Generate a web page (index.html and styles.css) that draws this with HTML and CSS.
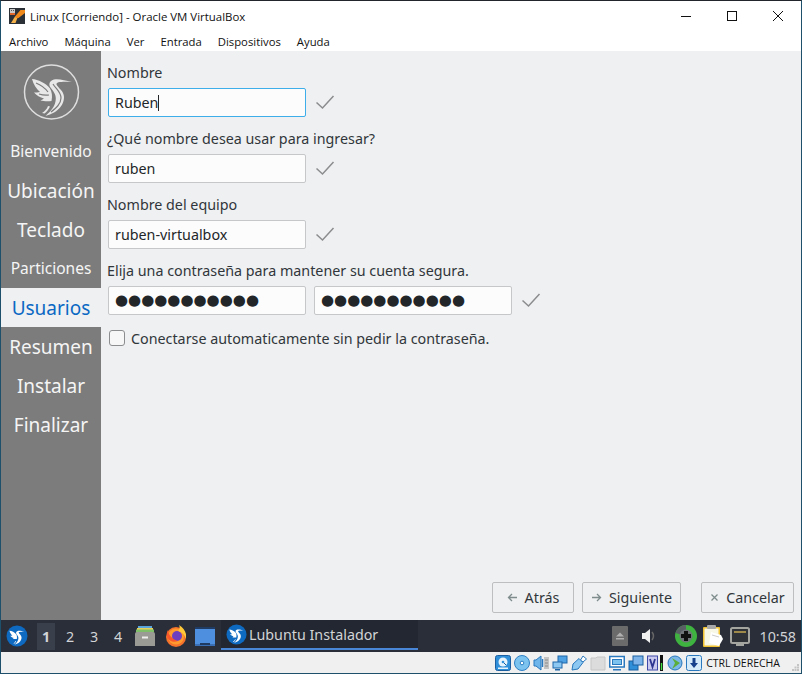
FILE: index.html
```html
<!DOCTYPE html>
<html lang="es">
<head>
    <meta charset="UTF-8">
    <title>Linux [Corriendo] - Oracle VM VirtualBox</title>
    <link rel="stylesheet" href="styles.css">
</head>
<body>
    <svg class="defs" width="0" height="0">
        <symbol id="bird" viewBox="0 0 58 58">
            <path d="M49 18 C42 16.500 36 14.500 31 15.500 C27 16.500 25 20 27.500 23.500 C30 27 33 30 32.800 35 C32.500 42 28 47 22.500 52 C30 50 41 44.500 41 33 C41 27 35 24 33.500 20.500 C33 18 38 17.500 49 18 Z"/>
            <path d="M9 15 C15 15.500 23 19 27 24.500 C29 28 29.500 32 28.500 37 C24 37.500 20 37 17.500 36.500 C19 35.800 20 35 21 34.500 C17 33.500 13.500 31.500 11 28.500 C13 28.500 15 28.500 17 28 C13.500 25 10.500 20.500 9 15 Z"/>
            <path d="M25 42 C24 45 21.500 47.500 19 49 L21.500 49.500 C24 47.500 26 45 27 42.500 Z"/>
        </symbol>
    </svg>

    <div class="window">
        <header class="titlebar">
            <svg class="vbox-logo" width="16" height="16" viewBox="0 0 16 16">
                <rect width="16" height="16" fill="#2b2f36"/>
                <path d="M2 15 L6 8.500 L9 8.500 L6.500 15 Z" fill="#f6b24a"/>
                <path d="M6 8.500 L11.500 2 L16 2 L16 5 L9.500 10 L7 10 Z" fill="#f08a1d"/>
                <rect x="1" y="1" width="5" height="4" fill="#c9c9c9"/>
                <rect x="2" y="2" width="1" height="1" fill="#555"/>
                <rect x="4" y="2" width="1" height="1" fill="#555"/>
                <rect x="1" y="5" width="5" height="2" fill="#e0672c"/>
            </svg>
            <span>Linux [Corriendo] - Oracle VM VirtualBox</span>
            <div class="window-buttons">
                <svg width="46" height="30" viewBox="0 0 46 30"><path d="M18 15.500h10" stroke="#111" fill="none"/></svg>
                <svg width="46" height="30" viewBox="0 0 46 30"><rect x="18.500" y="10.500" width="9" height="9" stroke="#111" fill="none"/></svg>
                <svg width="46" height="30" viewBox="0 0 46 30"><path d="M18 10l10 10M28 10l-10 10" stroke="#111" fill="none"/></svg>
            </div>
        </header>
        <nav class="menubar">
            <span>Archivo</span>
            <span>Máquina</span>
            <span>Ver</span>
            <span>Entrada</span>
            <span>Dispositivos</span>
            <span>Ayuda</span>
        </nav>

        <div class="installer">
            <aside class="sidebar">
                <svg class="logo" width="58" height="58" viewBox="0 0 58 58" fill="none" stroke="#dedede">
                    <circle cx="28.500" cy="28" r="27" stroke-width="1.500"/>
                    <use href="#bird" fill="#e8e8e8" stroke="none"/>
                    <path d="M13 19 C18 21 22 24 25 28 M16 30 C19 31 22 31.500 26 31 M30 20 C33 25 38 28 38 34 C38 40 33 44 28 48" stroke="#7c7c7c" stroke-width="1.200"/>
                </svg>
                <ul class="steps">
                    <li class="small">Bienvenido</li>
                    <li>Ubicación</li>
                    <li>Teclado</li>
                    <li class="small">Particiones</li>
                    <li class="active">Usuarios</li>
                    <li>Resumen</li>
                    <li>Instalar</li>
                    <li>Finalizar</li>
                </ul>
            </aside>

            <main class="content">
                <div class="form">
                    <label class="field-label">Nombre</label>
                    <div class="field-row">
                        <div class="input focused">Ruben<span class="caret"></span></div>
                        <svg class="check" width="20" height="16" viewBox="0 0 20 16"><path d="M1.500 7.500 L7.500 13 L18.500 1" /></svg>
                    </div>
                    <label class="field-label">¿Qué nombre desea usar para ingresar?</label>
                    <div class="field-row">
                        <div class="input">ruben</div>
                        <svg class="check" width="20" height="16" viewBox="0 0 20 16"><path d="M1.500 7.500 L7.500 13 L18.500 1" /></svg>
                    </div>
                    <label class="field-label">Nombre del equipo</label>
                    <div class="field-row">
                        <div class="input">ruben-virtualbox</div>
                        <svg class="check" width="20" height="16" viewBox="0 0 20 16"><path d="M1.500 7.500 L7.500 13 L18.500 1" /></svg>
                    </div>
                    <label class="field-label">Elija una contraseña para mantener su cuenta segura.</label>
                    <div class="field-row">
                        <div class="input dots">●●●●●●●●●●●</div>
                        <div class="input dots">●●●●●●●●●●●</div>
                        <svg class="check" width="20" height="16" viewBox="0 0 20 16"><path d="M1.500 7.500 L7.500 13 L18.500 1" /></svg>
                    </div>
                    <div class="autologin">
                        <span class="checkbox"></span>
                        <span>Conectarse automaticamente sin pedir la contraseña.</span>
                    </div>
                </div>
                <div class="actions">
                    <button class="btn btn-back">
                        <svg class="btn-icon" width="11" height="9" viewBox="0 0 11 9"><path d="M10 4.500H2M5 1L1.500 4.500L5 8"/></svg>Atrás
                    </button>
                    <button class="btn btn-next">
                        <svg class="btn-icon" width="11" height="9" viewBox="0 0 11 9"><path d="M1 4.500H9M6 1L9.500 4.500L6 8"/></svg>Siguiente
                    </button>
                    <button class="btn btn-cancel">
                        <svg class="btn-icon" width="9" height="9" viewBox="0 0 9 9"><path d="M1.500 1.500L7.500 7.500M7.500 1.500L1.500 7.500"/></svg>Cancelar
                    </button>
                </div>
            </main>
        </div>

        <div class="panel">
            <svg class="start" width="22" height="22" viewBox="0 0 22 22">
                <circle cx="11" cy="11" r="10.500" fill="#0e69c0"/>
                <use href="#bird" x="0" y="0" width="22" height="22" fill="#fff"/>
            </svg>
            <div class="desktops">
                <span class="current">1</span>
                <span>2</span>
                <span>3</span>
                <span>4</span>
            </div>
            <svg class="launcher files" width="20" height="20" viewBox="0 0 20 20">
                <rect x="3" y="0" width="14" height="3" fill="#5aa5dc"/>
                <rect x="2" y="2" width="16" height="2" fill="#e6cf5a"/>
                <rect x="1" y="3.500" width="18" height="3" fill="#7fbf6a"/>
                <path d="M0 8 Q0 6 2 6 H18 Q20 6 20 8 V20 H0 Z" fill="#9b9b95"/>
                <rect x="7" y="10.500" width="6" height="2" fill="#eee"/>
            </svg>
            <svg class="launcher firefox" width="20" height="22" viewBox="0 0 20 22">
                <circle cx="10" cy="12" r="10" fill="#f4722b"/>
                <circle cx="10" cy="11.500" r="8" fill="#ff9a2e"/>
                <circle cx="11" cy="11" r="5" fill="#6e3fbe"/>
                <path d="M13 0 C19 4 21 9 20 14 C18 9 16 7 12 6 C14 4 14 2 13 0 Z" fill="#ffc93a"/>
                <path d="M1 5 C3 10 6 14 12 16 C8 18 2 16 1 11 Z" fill="#f9562c"/>
            </svg>
            <svg class="launcher desktop" width="20" height="19" viewBox="0 0 20 19">
                <rect width="20" height="3" fill="#1f3b63"/>
                <rect y="2" width="20" height="16" fill="#4f8fdf"/>
                <rect y="17" width="20" height="2" fill="#3a6fb5"/>
                <rect x="5" y="16" width="10" height="2" fill="#1f3b63"/>
            </svg>
            <div class="task">
                <svg width="21" height="21" viewBox="0 0 22 22">
                    <circle cx="11" cy="11" r="10.500" fill="#0e69c0"/>
                    <use href="#bird" width="22" height="22" fill="#fff"/>
                </svg>
                <span>Lubuntu Instalador</span>
            </div>
            <div class="tray">
                <svg width="16" height="20" viewBox="0 0 16 20">
                    <rect width="16" height="20" rx="1" fill="#6b6b6b"/>
                    <path d="M8 6.500 L12 10.500 H4 Z M4 12 H12 V13.500 H4 Z" fill="#b0b0b0"/>
                </svg>
                <svg class="tray-sound" width="14" height="14" viewBox="0 0 14 14">
                    <path d="M0 4 H3 L8 0 V14 L3 10 H0 Z" fill="#f0f0f0"/>
                    <path d="M10 3 Q13 7 10 11" stroke="#666" fill="none" stroke-width="1.500"/>
                </svg>
                <svg class="tray-disc" width="22" height="22" viewBox="0 0 22 22">
                    <circle cx="11" cy="11" r="11" fill="#3fb33f"/>
                    <path d="M11 11 L11 0 A11 11 0 0 0 0.500 8 Z" fill="#5a5f66"/>
                    <circle cx="11" cy="11" r="6.500" fill="#70757a"/>
                    <path d="M9 6h4v3h3v4h-3v3H9v-3H6V9h3z" fill="#111"/>
                </svg>
                <svg class="tray-clip" width="20" height="22" viewBox="0 0 20 22">
                    <rect y="2" width="17" height="20" rx="1" fill="#f1c232"/>
                    <rect x="1.500" y="3.500" width="14" height="17" fill="#f8f6e4"/>
                    <rect x="4" y="0" width="9" height="4" rx="1" fill="#a8a8a8"/>
                    <path d="M8 7 L18 10 L20 14 L16 21 L6 18 Z" fill="#fff"/>
                    <path d="M9 10 L16 12" stroke="#ccc"/>
                </svg>
                <svg class="tray-net" width="20" height="19" viewBox="0 0 20 19">
                    <rect x="1" y="1" width="18" height="15" rx="1.500" fill="#2f3236" stroke="#a5a5a0" stroke-width="2"/>
                    <rect x="6" y="16" width="8" height="3" fill="#a5a5a0"/>
                    <rect x="4" y="4" width="12" height="2" fill="#a08a4a"/>
                </svg>
                <span class="clock">10:58</span>
            </div>
        </div>

        <footer class="statusbar">
            <svg width="16" height="16" viewBox="0 0 16 16"><rect x=".5" y=".5" width="15" height="15" rx="2" fill="#2f8fd8" stroke="#1b5fa0"/><circle cx="8" cy="7" r="4.500" fill="#e8f4fc"/><path d="M8 7 L11 10" stroke="#1b5fa0"/><circle cx="8" cy="7" r="1.300" fill="#2f8fd8"/><rect x="3" y="12.500" width="10" height="1.500" fill="#e8f4fc"/></svg>
            <svg width="16" height="16" viewBox="0 0 16 16"><circle cx="8" cy="8" r="7.500" fill="#7cc4ef" stroke="#2f7fc4"/><circle cx="8" cy="8" r="1.800" fill="#fff" stroke="#2f7fc4"/></svg>
            <svg width="16" height="16" viewBox="0 0 16 16"><path d="M1 5 H3 L8 1 V15 L3 11 H1 Z" fill="#6db5ea" stroke="#2a78bd"/><path d="M9.500 4 V12" stroke="#2a78bd" stroke-width="1.500"/><rect x="11" y="2" width="5" height="12" fill="#c4c4c4"/><path d="M12 5h3M12 8h3M12 11h3" stroke="#8a8a8a"/></svg>
            <svg width="16" height="16" viewBox="0 0 16 16"><rect x="6" y="1" width="9" height="7" fill="#4ea2e4" stroke="#1f66a8"/><rect x="1" y="7" width="9" height="6" fill="#8cc8f2" stroke="#1f66a8"/><rect x="3" y="14" width="5" height="1.500" fill="#1f66a8"/></svg>
            <svg width="16" height="16" viewBox="0 0 16 16"><path d="M1 15 L2 9 L8 3.500 L12 7.500 L7 14 Z" fill="#8cc8f2" stroke="#2a78bd"/><path d="M9.500 5 L12 1 L15.500 4 L12 7 Z" fill="#fff" stroke="#2a78bd"/></svg>
            <svg width="16" height="16" viewBox="0 0 16 16"><path d="M1 3 H6 L7 2 H15 V15 H1 Z" fill="#dcdcdc" stroke="#c6c6c6"/></svg>
            <svg width="16" height="16" viewBox="0 0 16 16"><rect x=".75" y="1.500" width="14.500" height="10.500" fill="#fff" stroke="#2a78bd" stroke-width="1.500"/><rect x="3.500" y="4.500" width="9" height="5" fill="#7cc4ef" stroke="#2a78bd"/><rect x="4" y="14" width="8" height="1.500" fill="#2a78bd"/></svg>
            <svg width="16" height="16" viewBox="0 0 16 16"><rect x="1" y="6" width="9" height="9" fill="#2f8fd8" stroke="#1b5fa0"/><rect x="5" y="1" width="10" height="9" fill="#7cb4ea" stroke="#1b5fa0"/></svg>
            <svg class="vram" width="11" height="16" viewBox="0 0 11 16"><rect x=".5" y="1" width="10" height="14" fill="#c9c9ef" stroke="#3f4aa8"/><path d="M3 4 L5.500 12 L8 4" stroke="#2d3590" stroke-width="1.800" fill="none"/></svg>
            <svg class="cap" width="3" height="16" viewBox="0 0 3 16"><rect width="3" height="16" fill="#111"/><rect x=".8" y="8" width="1.400" height="7" fill="#3fe03f"/></svg>
            <svg class="globe" width="16" height="16" viewBox="0 0 16 16"><circle cx="8" cy="8" r="7" fill="#7cb8e8" stroke="#2a78bd"/><path d="M5 3 L13 8 L5 14 L8 8 Z" fill="#5cae3a"/></svg>
            <svg width="16" height="16" viewBox="0 0 16 16"><rect x=".5" y=".5" width="15" height="15" rx="2" fill="#d6ebfa" stroke="#2a78bd"/><path d="M6.500 3 H9.500 V8 H12 L8 13 L4 8 H6.500 Z" fill="#17408b"/></svg>
            <span class="host-key">CTRL DERECHA</span>
            <svg class="grip" width="7" height="7" viewBox="0 0 7 7"><path d="M5 0h2v2H5zM2.500 2.500h2v2h-2zM5 2.500h2v2H5zM0 5h2v2H0zM2.500 5h2v2h-2zM5 5h2v2H5z" fill="#c4c4c4"/></svg>
        </footer>
    </div>
</body>
</html>
```

FILE: styles.css
```css
html, body {
    margin: 0;
    padding: 0;
    height: 100%;
}

.defs {
    display: block;
    height: 0;
}

.window {
    width: 802px;
    height: 674px;
    box-sizing: border-box;
    display: flex;
    flex-direction: column;
    background: #f0f0f0;
    border: 1px solid #1e4f6b;
    border-top-color: #22262c;
    overflow: hidden;
}

.titlebar {
    height: 30px;
    flex: none;
    display: flex;
    align-items: center;
    background: #fff;
    font-family: "Open Sans", "Noto Sans", sans-serif;
    font-size: 11.450px;
    color: #111;
}

.vbox-logo {
    margin-left: 8px;
    margin-right: 5px;
}

.window-buttons {
    margin-left: auto;
    display: flex;
}

.menubar {
    height: 20px;
    flex: none;
    display: flex;
    gap: 16px;
    padding-left: 8px;
    align-items: center;
    background: #fff;
    font-family: "Open Sans", "Noto Sans", sans-serif;
    font-size: 11.300px;
    color: #111;
}

.installer {
    flex: 1;
    display: flex;
    min-height: 0;
    background: #eff0f1;
}

.sidebar {
    width: 100px;
    flex: none;
    background: #7c7c7c;
    display: flex;
    flex-direction: column;
    align-items: center;
}

.logo {
    margin-top: 13px;
    margin-left: 1px;
}

.steps {
    list-style: none;
    margin: 10px 0 0;
    padding: 0;
    width: 100%;
    text-align: center;
    font-family: "Noto Sans", sans-serif;
    font-size: 19px;
    color: #f5f5f5;
}

.steps li {
    height: 39px;
    line-height: 41px;
}

.steps li.small {
    font-size: 15.500px;
    line-height: 39px;
}

.steps li.active {
    background: #eff0f1;
    color: #0a68c4;
}

.content {
    flex: 1;
    min-width: 0;
    display: flex;
    flex-direction: column;
    justify-content: space-between;
    padding: 12px 7px 7px 6px;
    font-family: "Noto Sans", sans-serif;
    font-size: 14.300px;
    color: #31363b;
}

.form {
    display: flex;
    flex-direction: column;
}

.field-label {
    height: 20px;
    line-height: 20px;
    margin-bottom: 5px;
}

.field-row {
    display: flex;
    align-items: center;
    gap: 8px;
    margin-bottom: 12px;
    padding-left: 1px;
}

.input {
    width: 198px;
    height: 29px;
    box-sizing: border-box;
    padding-left: 6px;
    line-height: 27px;
    background: #fcfcfc;
    border: 1px solid #c5c7c9;
    border-radius: 2px;
    color: #232629;
}

.input.focused {
    border-color: #3daee9;
}

.caret {
    display: inline-block;
    width: 1px;
    height: 16px;
    background: #232629;
    vertical-align: -3px;
}

.dots {
    font-family: "DejaVu Sans", sans-serif;
    font-size: 15px;
}

.check {
    margin-left: 1px;
    fill: none;
    stroke: #8a8c8e;
    stroke-width: 1.500;
}

.autologin {
    display: flex;
    align-items: center;
    gap: 6px;
    margin-top: 1px;
    padding-left: 2px;
    height: 20px;
}

.checkbox {
    width: 14px;
    height: 14px;
    background: #f7f7f7;
    border: 1px solid #8b8d8f;
    border-radius: 3px;
}

.actions {
    display: flex;
    justify-content: flex-end;
    gap: 8px;
}

.btn {
    height: 31px;
    padding: 0;
    display: flex;
    align-items: center;
    justify-content: center;
    background: #eff0f1;
    border: 1px solid #bcbebf;
    border-radius: 2px;
    font-family: "Noto Sans", sans-serif;
    font-size: 14.300px;
    color: #31363b;
}

.btn-back {
    width: 82px;
}

.btn-next {
    width: 99px;
}

.btn-cancel {
    width: 93px;
    margin-left: 12px;
}

.btn-icon {
    margin-right: 7px;
    fill: none;
    stroke: #7f8c8d;
    stroke-width: 1.300;
}

.panel {
    height: 32px;
    flex: none;
    display: flex;
    align-items: center;
    background: #2a2e39;
    font-family: "Noto Sans", sans-serif;
    color: #d2d4d6;
    font-size: 14.300px;
}

.start {
    margin-left: 5px;
}

.desktops {
    display: flex;
    margin-left: 9px;
}

.desktops span {
    width: 24px;
    height: 27px;
    line-height: 27px;
    text-align: center;
}

.desktops .current {
    width: 18px;
    margin-right: 3px;
    background: #3a3f4c;
    font-weight: bold;
}

.files {
    margin-left: 5px;
}

.firefox {
    margin-left: 11px;
}

.desktop {
    margin-left: 9px;
}

.task {
    width: 197px;
    height: 30px;
    align-self: flex-start;
    margin-left: 6px;
    box-sizing: border-box;
    display: flex;
    align-items: center;
    gap: 2px;
    padding: 1px 0 0 5px;
    border-bottom: 2px solid #4a86d8;
    background: #232731;
}

.tray {
    margin-left: auto;
    display: flex;
    align-items: center;
    padding-right: 5px;
}

.tray-sound {
    margin-left: 14px;
}

.tray-disc {
    margin-left: 19px;
}

.tray-clip {
    margin-left: 6px;
}

.tray-net {
    margin-left: 7px;
}

.clock {
    margin-left: 9px;
}

.statusbar {
    height: 21px;
    flex: none;
    display: flex;
    align-items: center;
    justify-content: flex-end;
    gap: 3px;
    padding-right: 2px;
    background: #f0f0f0;
    font-family: "Open Sans", "Noto Sans", sans-serif;
    font-size: 10.500px;
    color: #111;
}

.cap {
    margin-left: -1px;
}

.globe {
    margin-left: 1px;
}

.host-key {
    margin-left: 1px;
}

.grip {
    margin-left: 9px;
    align-self: flex-end;
    margin-bottom: 2px;
}
```
